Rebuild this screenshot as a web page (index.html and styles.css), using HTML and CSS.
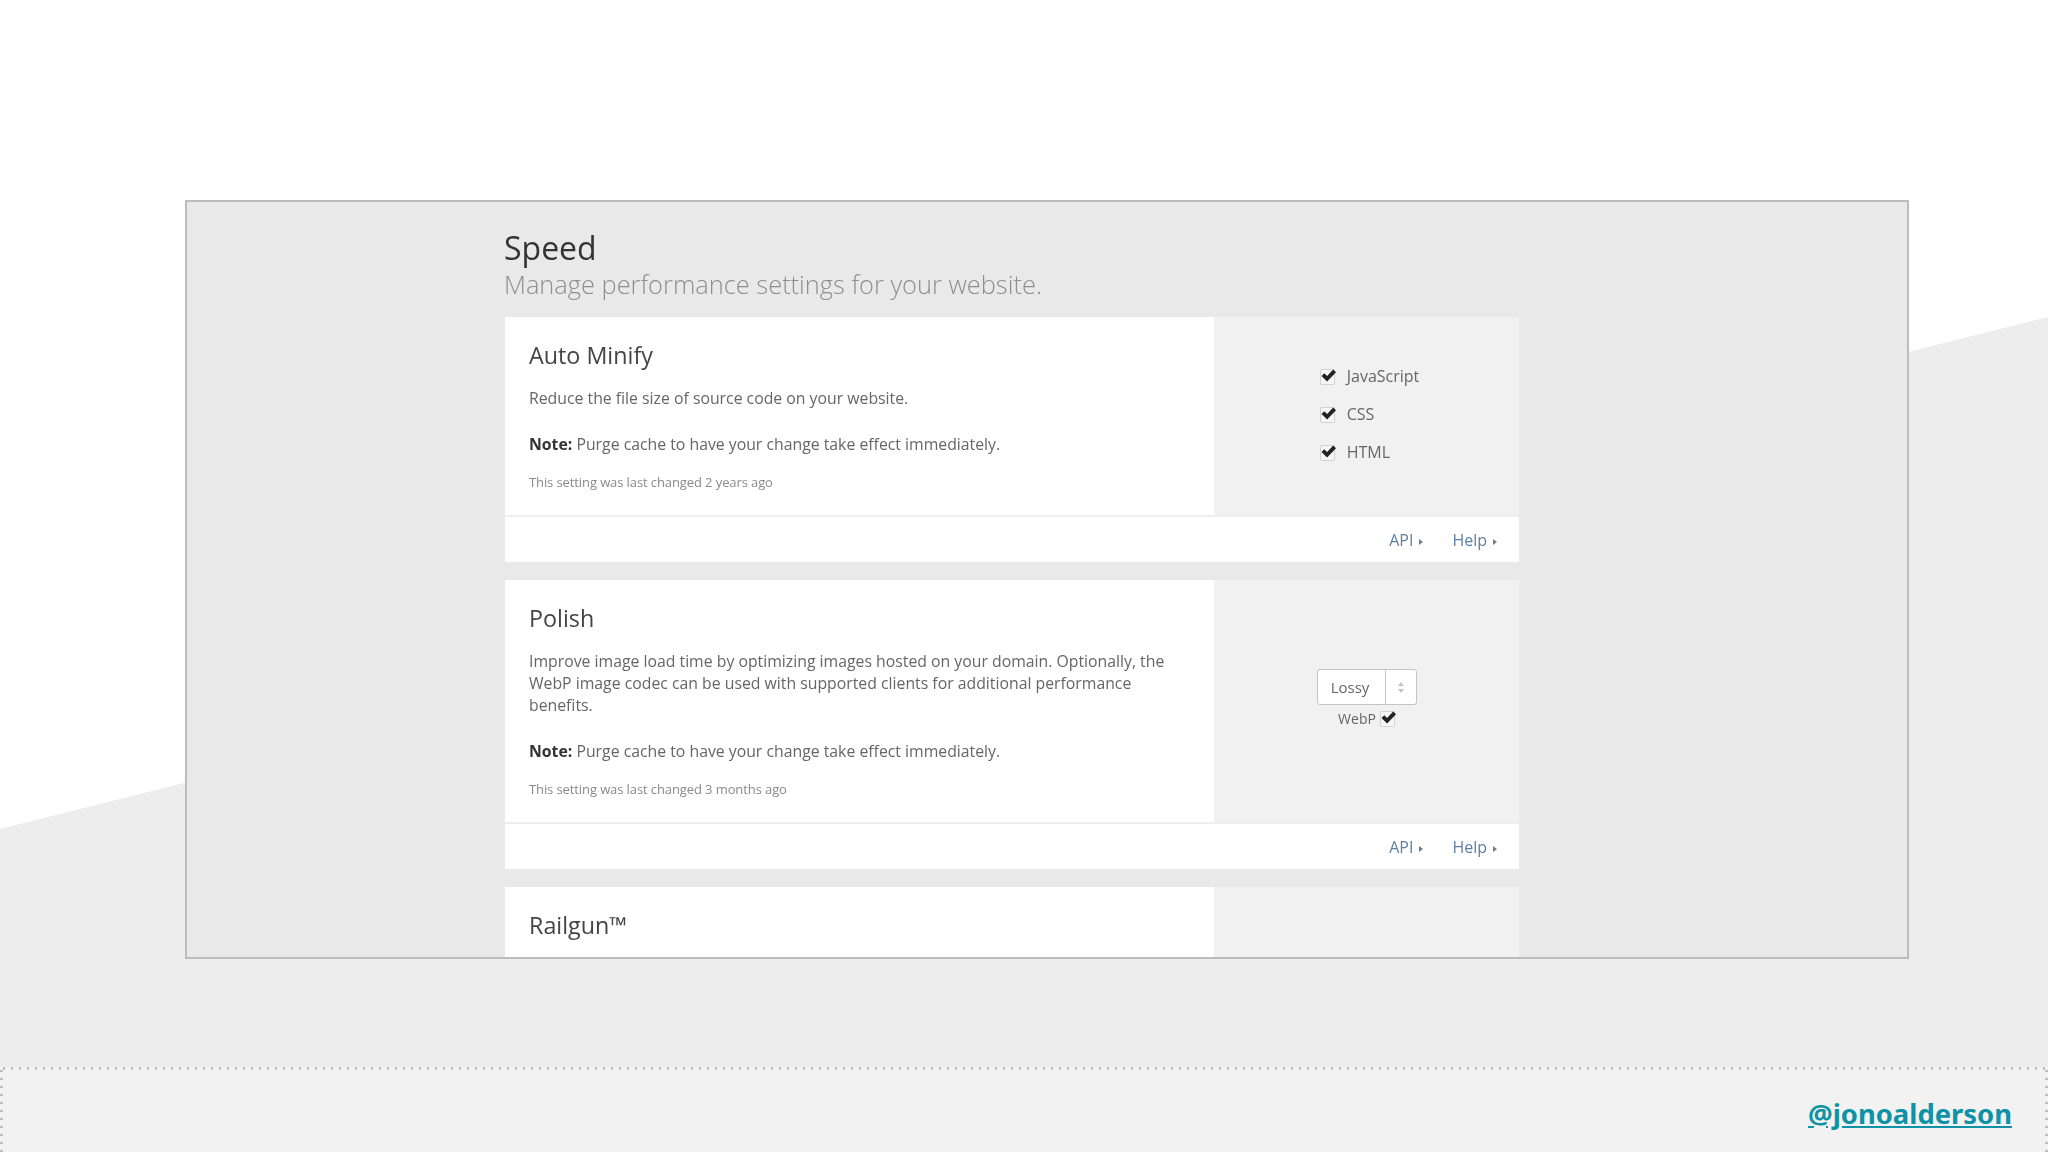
FILE: index.html
```html
<!DOCTYPE html>
<html lang="en">
<head>
  <meta charset="UTF-8">
  <meta name="viewport" content="width=device-width, initial-scale=1.0">
  <title>Speed</title>
  <link rel="stylesheet" href="styles.css">
</head>
<body>
  <div class="slope"></div>
  <main class="stage">
    <div class="frame">
      <div class="page">
        <h1>Speed</h1>
        <h2>Manage performance settings for your website.</h2>

        <section class="card">
          <div class="card-main">
            <div class="card-text">
              <h3>Auto Minify</h3>
              <p>Reduce the file size of source code on your website.</p>
              <p class="note"><b>Note:</b> Purge cache to have your change take effect immediately.</p>
              <p class="changed">This setting was last changed 2 years ago</p>
            </div>
            <div class="card-control checks">
              <div class="check-list">
                <label class="check"><span class="box"><svg viewBox="0 0 18 16"><path d="M1.5 8.5 L4.5 5.5 L7.5 8.5 L14 1.5 L17 4.5 L7.5 14.5 Z"/></svg></span>JavaScript</label>
                <label class="check"><span class="box"><svg viewBox="0 0 18 16"><path d="M1.5 8.5 L4.5 5.5 L7.5 8.5 L14 1.5 L17 4.5 L7.5 14.5 Z"/></svg></span>CSS</label>
                <label class="check"><span class="box"><svg viewBox="0 0 18 16"><path d="M1.5 8.5 L4.5 5.5 L7.5 8.5 L14 1.5 L17 4.5 L7.5 14.5 Z"/></svg></span>HTML</label>
              </div>
            </div>
          </div>
          <div class="card-foot">
            <a href="#">API</a>
            <a href="#">Help</a>
          </div>
        </section>

        <section class="card">
          <div class="card-main">
            <div class="card-text">
              <h3>Polish</h3>
              <p>Improve image load time by optimizing images hosted on your domain. Optionally, the WebP image codec can be used with supported clients for additional performance benefits.</p>
              <p class="note"><b>Note:</b> Purge cache to have your change take effect immediately.</p>
              <p class="changed">This setting was last changed 3 months ago</p>
            </div>
            <div class="card-control polish">
              <div class="select">
                <span class="select-value">Lossy</span>
                <span class="select-arrows"><i class="up"></i><i class="down"></i></span>
              </div>
              <label class="webp">WebP<span class="box"><svg viewBox="0 0 18 16"><path d="M1.5 8.5 L4.5 5.5 L7.5 8.5 L14 1.5 L17 4.5 L7.5 14.5 Z"/></svg></span></label>
            </div>
          </div>
          <div class="card-foot">
            <a href="#">API</a>
            <a href="#">Help</a>
          </div>
        </section>

        <section class="card">
          <div class="card-main">
            <div class="card-text">
              <h3>Railgun™</h3>
            </div>
            <div class="card-control"></div>
          </div>
        </section>
      </div>
    </div>
  </main>
  <footer class="footer">
    <a class="handle" href="#">@jonoalderson</a>
  </footer>
</body>
</html>
```

FILE: styles.css
```css
* {
  box-sizing: border-box;
}
html, body {
  margin: 0;
  height: 100%;
}
body {
  position: relative;
  display: flex;
  flex-direction: column;
  width: 2048px;
  height: 1152px;
  overflow: hidden;
  background-color: white;
  font-family: "Open Sans", sans-serif;
}
.slope {
  position: absolute;
  left: 0;
  top: 0;
  width: 100%;
  height: 1068px;
  background-color: #ededee;
  clip-path: polygon(0 829px, 100% 317px, 100% 100%, 0 100%);
}
.stage {
  position: relative;
  height: 1067px;
  padding: 200px 0 0 185px;
}
.frame {
  width: 1724px;
  height: 759px;
  overflow: hidden;
  background-color: #e9e9ea;
  border: 2px solid #bcbcbd;
}
.page {
  width: 1014px;
  margin-left: 318px;
  filter: blur(0.4px);
}
h1 {
  margin: 24px 0 0 -1px;
  font-size: 32px;
  line-height: 44px;
  font-weight: 400;
  color: #333;
}
h2 {
  margin: 0 0 19px -1px;
  font-size: 25.4px;
  line-height: 28px;
  font-weight: 300;
  color: #8f8f90;
}
.card {
  margin-bottom: 18px;
}
.card-main {
  display: grid;
  grid-template-columns: 709px 305px;
}
.card-text {
  padding: 22px 24px 24px;
  background-color: white;
}
.card-control {
  background-color: #f1f1f2;
}
h3 {
  margin: 0 0 16px;
  font-size: 23.3px;
  line-height: 32px;
  font-weight: 400;
  color: #444;
}
p {
  margin: 0;
  font-size: 15.8px;
  line-height: 22px;
  color: #666;
}
p.note {
  margin-top: 24px;
}
p b {
  color: #333;
}
p.changed {
  margin-top: 18px;
  font-size: 13px;
  line-height: 18px;
  letter-spacing: -0.1px;
  color: #8a8a8a;
}
.checks {
  display: flex;
  justify-content: center;
  align-items: center;
  padding: 0 0 4px 6px;
}
.check-list {
  display: flex;
  flex-direction: column;
  gap: 16px;
}
.check {
  display: flex;
  align-items: center;
  gap: 12px;
  height: 22px;
  font-size: 16px;
  color: #666;
}
.box {
  position: relative;
  display: block;
  width: 15px;
  height: 16px;
  margin-top: 1px;
  background-color: #f6f6f6;
  border: 1px solid #d2d2d2;
  border-radius: 2px;
}
.box svg {
  position: absolute;
  left: -1px;
  top: -2px;
  width: 17px;
  height: 15px;
  fill: #222;
}
.polish {
  display: flex;
  flex-direction: column;
  align-items: center;
  padding-top: 89px;
}
.select {
  display: flex;
  width: 100px;
  height: 36px;
  background-color: white;
  border: 1px solid #c4c4c4;
  border-radius: 3px;
}
.select-value {
  width: 68px;
  padding-right: 2px;
  border-right: 1px solid #c4c4c4;
  font-size: 15px;
  line-height: 34px;
  text-align: center;
  color: #666;
}
.select-arrows {
  flex: 1;
  display: flex;
  flex-direction: column;
  justify-content: center;
  align-items: center;
  gap: 3px;
}
.select-arrows i {
  width: 0;
  height: 0;
  border-left: 3px solid transparent;
  border-right: 3px solid transparent;
}
.select-arrows .up {
  border-bottom: 4px solid #c2c2c2;
}
.select-arrows .down {
  border-top: 4px solid #c2c2c2;
}
.webp {
  display: flex;
  align-items: center;
  gap: 4px;
  margin-top: 2px;
  height: 22px;
  font-size: 14px;
  color: #666;
}
.card-foot {
  display: flex;
  justify-content: flex-end;
  align-items: center;
  gap: 29px;
  height: 47px;
  padding-right: 22px;
  background-color: white;
  border-top: 2px solid #eeeeef;
}
.card-foot a {
  font-size: 16px;
  color: #5c80a6;
  text-decoration: none;
}
.card-foot a::after {
  content: "";
  display: inline-block;
  margin-left: 6px;
  vertical-align: 1px;
  border-left: 4px solid #6a7f95;
  border-top: 3px solid transparent;
  border-bottom: 3px solid transparent;
}
.footer {
  position: relative;
  display: flex;
  justify-content: flex-end;
  align-items: center;
  height: 85px;
  padding: 7px 36px 0 0;
  background-color: #f2f2f3;
  background-image:
    radial-gradient(circle, #b4b4b4 1px, transparent 1.4px),
    radial-gradient(circle, #b4b4b4 1px, transparent 1.4px),
    radial-gradient(circle, #b4b4b4 1px, transparent 1.4px);
  background-size: 8px 3px, 3px 8px, 3px 8px;
  background-position: 0 0, 0 0, 100% 0;
  background-repeat: repeat-x, repeat-y, repeat-y;
}
.handle {
  font-family: "Noto Sans", sans-serif;
  font-size: 27.4px;
  font-weight: 700;
  color: #0e93a6;
}
```
